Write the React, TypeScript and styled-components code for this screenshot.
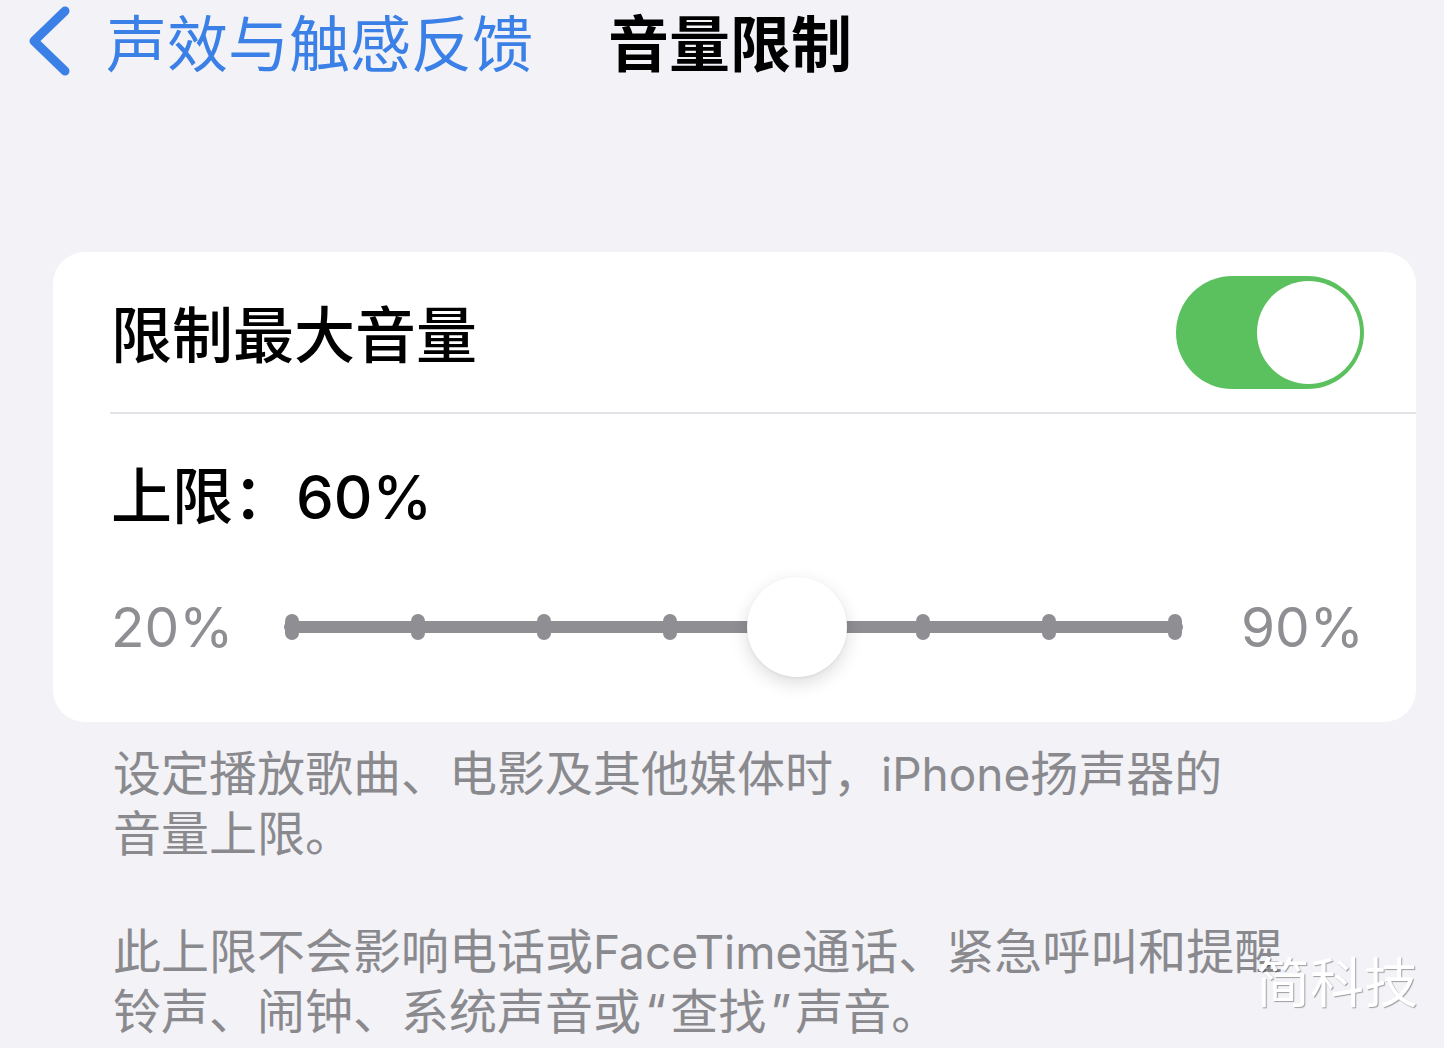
import React from "react";
import styled, { createGlobalStyle } from "styled-components";

const Global = createGlobalStyle`
  html, body { margin: 0; padding: 0; background: #f2f2f7; }
  body { font-family: Inter, "Noto Sans CJK SC", sans-serif; -webkit-font-smoothing: antialiased; }
`;

const Page = styled.div`
  position: relative;
  width: 1444px;
  height: 1048px;
  overflow: hidden;
  background: #f2f2f7;
`;

const NavBar = styled.div`
  display: flex;
  align-items: center;
  height: 82px;
  padding-left: 26px;
`;

const BackLink = styled.div`
  display: flex;
  align-items: center;
  gap: 34px;
  color: #3b80e6;
  font-family: "Noto Sans CJK SC", sans-serif;
  font-size: 61px;
  font-weight: 400;
  line-height: 80px;
`;

const Title = styled.div`
  margin-left: 75px;
  color: #000;
  font-family: "Noto Sans CJK SC", sans-serif;
  font-size: 61px;
  font-weight: 700;
  line-height: 80px;
`;

const Card = styled.div`
  margin: 170px 28px 0 53px;
  background: #fff;
  border-radius: 32px;
  overflow: hidden;
`;

const ToggleRow = styled.div`
  display: flex;
  align-items: center;
  justify-content: space-between;
  height: 160px;
  padding: 0 52px 0 58px;
`;

const RowLabel = styled.div`
  font-family: "Noto Sans CJK SC", sans-serif;
  font-size: 61px;
  font-weight: 500;
  color: #000;
  line-height: 1.2;
`;

const Switch = styled.div<{ $on: boolean }>`
  position: relative;
  width: 188px;
  height: 113px;
  border-radius: 57px;
  background: ${(p) => (p.$on ? "#5ac15e" : "#e5e5ea")};
`;

const Knob = styled.div<{ $on: boolean }>`
  position: absolute;
  top: 5px;
  ${(p) => (p.$on ? "right: 4px;" : "left: 4px;")}
  width: 103px;
  height: 103px;
  border-radius: 50%;
  background: #fff;
`;

const Divider = styled.div`
  height: 2px;
  margin-left: 57px;
  background: #e4e4e8;
`;

const LimitSection = styled.div`
  padding: 42px 60px 45px 58px;
`;

const LimitLabel = styled.div`
  display: flex;
  align-items: baseline;
  height: 74px;
  font-family: "Noto Sans CJK SC", sans-serif;
  font-size: 61px;
  font-weight: 500;
  color: #000;
  line-height: 74px;
`;

const LimitValue = styled.span`
  font-family: Inter, sans-serif;
  font-size: 60px;
  font-weight: 500;
  margin-left: 2px;
`;

const SliderRow = styled.div`
  display: flex;
  align-items: center;
  gap: 58px;
  height: 100px;
  margin-top: 47px;
`;

const EndLabel = styled.div`
  font-family: Inter, sans-serif;
  font-size: 55px;
  font-weight: 400;
  color: #8e8e93;
  line-height: 1.2;
  width: 115px;
`;

const Track = styled.div`
  position: relative;
  flex: 1;
  height: 12px;
  border-radius: 6px;
  background: #8e8e93;
`;

const Tick = styled.div`
  position: absolute;
  top: -7px;
  width: 14px;
  height: 26px;
  margin-left: -7px;
  border-radius: 7px;
  background: #8e8e93;
`;

const Thumb = styled.div`
  position: absolute;
  top: -44px;
  width: 100px;
  height: 100px;
  margin-left: -50px;
  border-radius: 50%;
  background: #fff;
  box-shadow: 0 6px 18px rgba(0, 0, 0, 0.14), 0 1px 3px rgba(0, 0, 0, 0.06);
`;

const Footer = styled.div`
  padding: 22px 40px 0 113px;
  color: #8a8a8e;
  font-size: 48px;
  line-height: 59px;
  font-weight: 400;
`;

const FooterPara = styled.p<{ $gap?: boolean }>`
  margin: ${(p) => (p.$gap ? "59px" : "0")} 0 0 0;
  white-space: nowrap;
`;

const Latin = styled.span`
  font-size: 46px;
`;

const Quote = styled.span`
  font-family: Inter, sans-serif;
  padding: 0 4px;
`;

const Watermark = styled.div`
  position: absolute;
  left: 1256px;
  top: 950px;
  font-family: "Noto Sans CJK SC", sans-serif;
  font-size: 54px;
  font-weight: 400;
  color: #fff;
  line-height: 1.1;
  text-shadow: 1px 1px 1px rgba(0, 0, 0, 0.35);
`;

const Chevron = () => (
  <svg width="46" height="72" viewBox="0 0 46 72">
    <path
      d="M39 6 L8 36 L39 66"
      fill="none"
      stroke="#3b80e6"
      strokeWidth="9"
      strokeLinecap="round"
      strokeLinejoin="round"
    />
  </svg>
);

const STEPS = 8;
const VALUE_INDEX = 4;
const INSET = 8;

const Slider = () => {
  const pos = (i: number) =>
    `calc(${INSET}px + (100% - ${INSET * 2}px) * ${i / (STEPS - 1)})`;
  return (
    <Track>
      {Array.from({ length: STEPS }).map((_, i) =>
        i === VALUE_INDEX ? null : <Tick key={i} style={{ left: pos(i) }} />
      )}
      <Thumb style={{ left: pos(VALUE_INDEX) }} />
    </Track>
  );
};

export default function App() {
  return (
    <Page>
      <Global />
      <NavBar>
        <BackLink>
          <Chevron />
          <span>声效与触感反馈</span>
        </BackLink>
        <Title>音量限制</Title>
      </NavBar>
      <Card>
        <ToggleRow>
          <RowLabel>限制最大音量</RowLabel>
          <Switch $on>
            <Knob $on />
          </Switch>
        </ToggleRow>
        <Divider />
        <LimitSection>
          <LimitLabel>
            上限：<LimitValue>60%</LimitValue>
          </LimitLabel>
          <SliderRow>
            <EndLabel>20%</EndLabel>
            <Slider />
            <EndLabel>90%</EndLabel>
          </SliderRow>
        </LimitSection>
      </Card>
      <Footer>
        <FooterPara>
          设定播放歌曲、电影及其他媒体时，<Latin>iPhone</Latin>扬声器的
          <br />
          音量上限。
        </FooterPara>
        <FooterPara $gap>
          此上限不会影响电话或<Latin>FaceTime</Latin>通话、紧急呼叫和提醒
          <br />
          铃声、闹钟、系统声音或<Quote>“</Quote>查找<Quote>”</Quote>声音。
        </FooterPara>
      </Footer>
      <Watermark>简科技</Watermark>
    </Page>
  );
}
